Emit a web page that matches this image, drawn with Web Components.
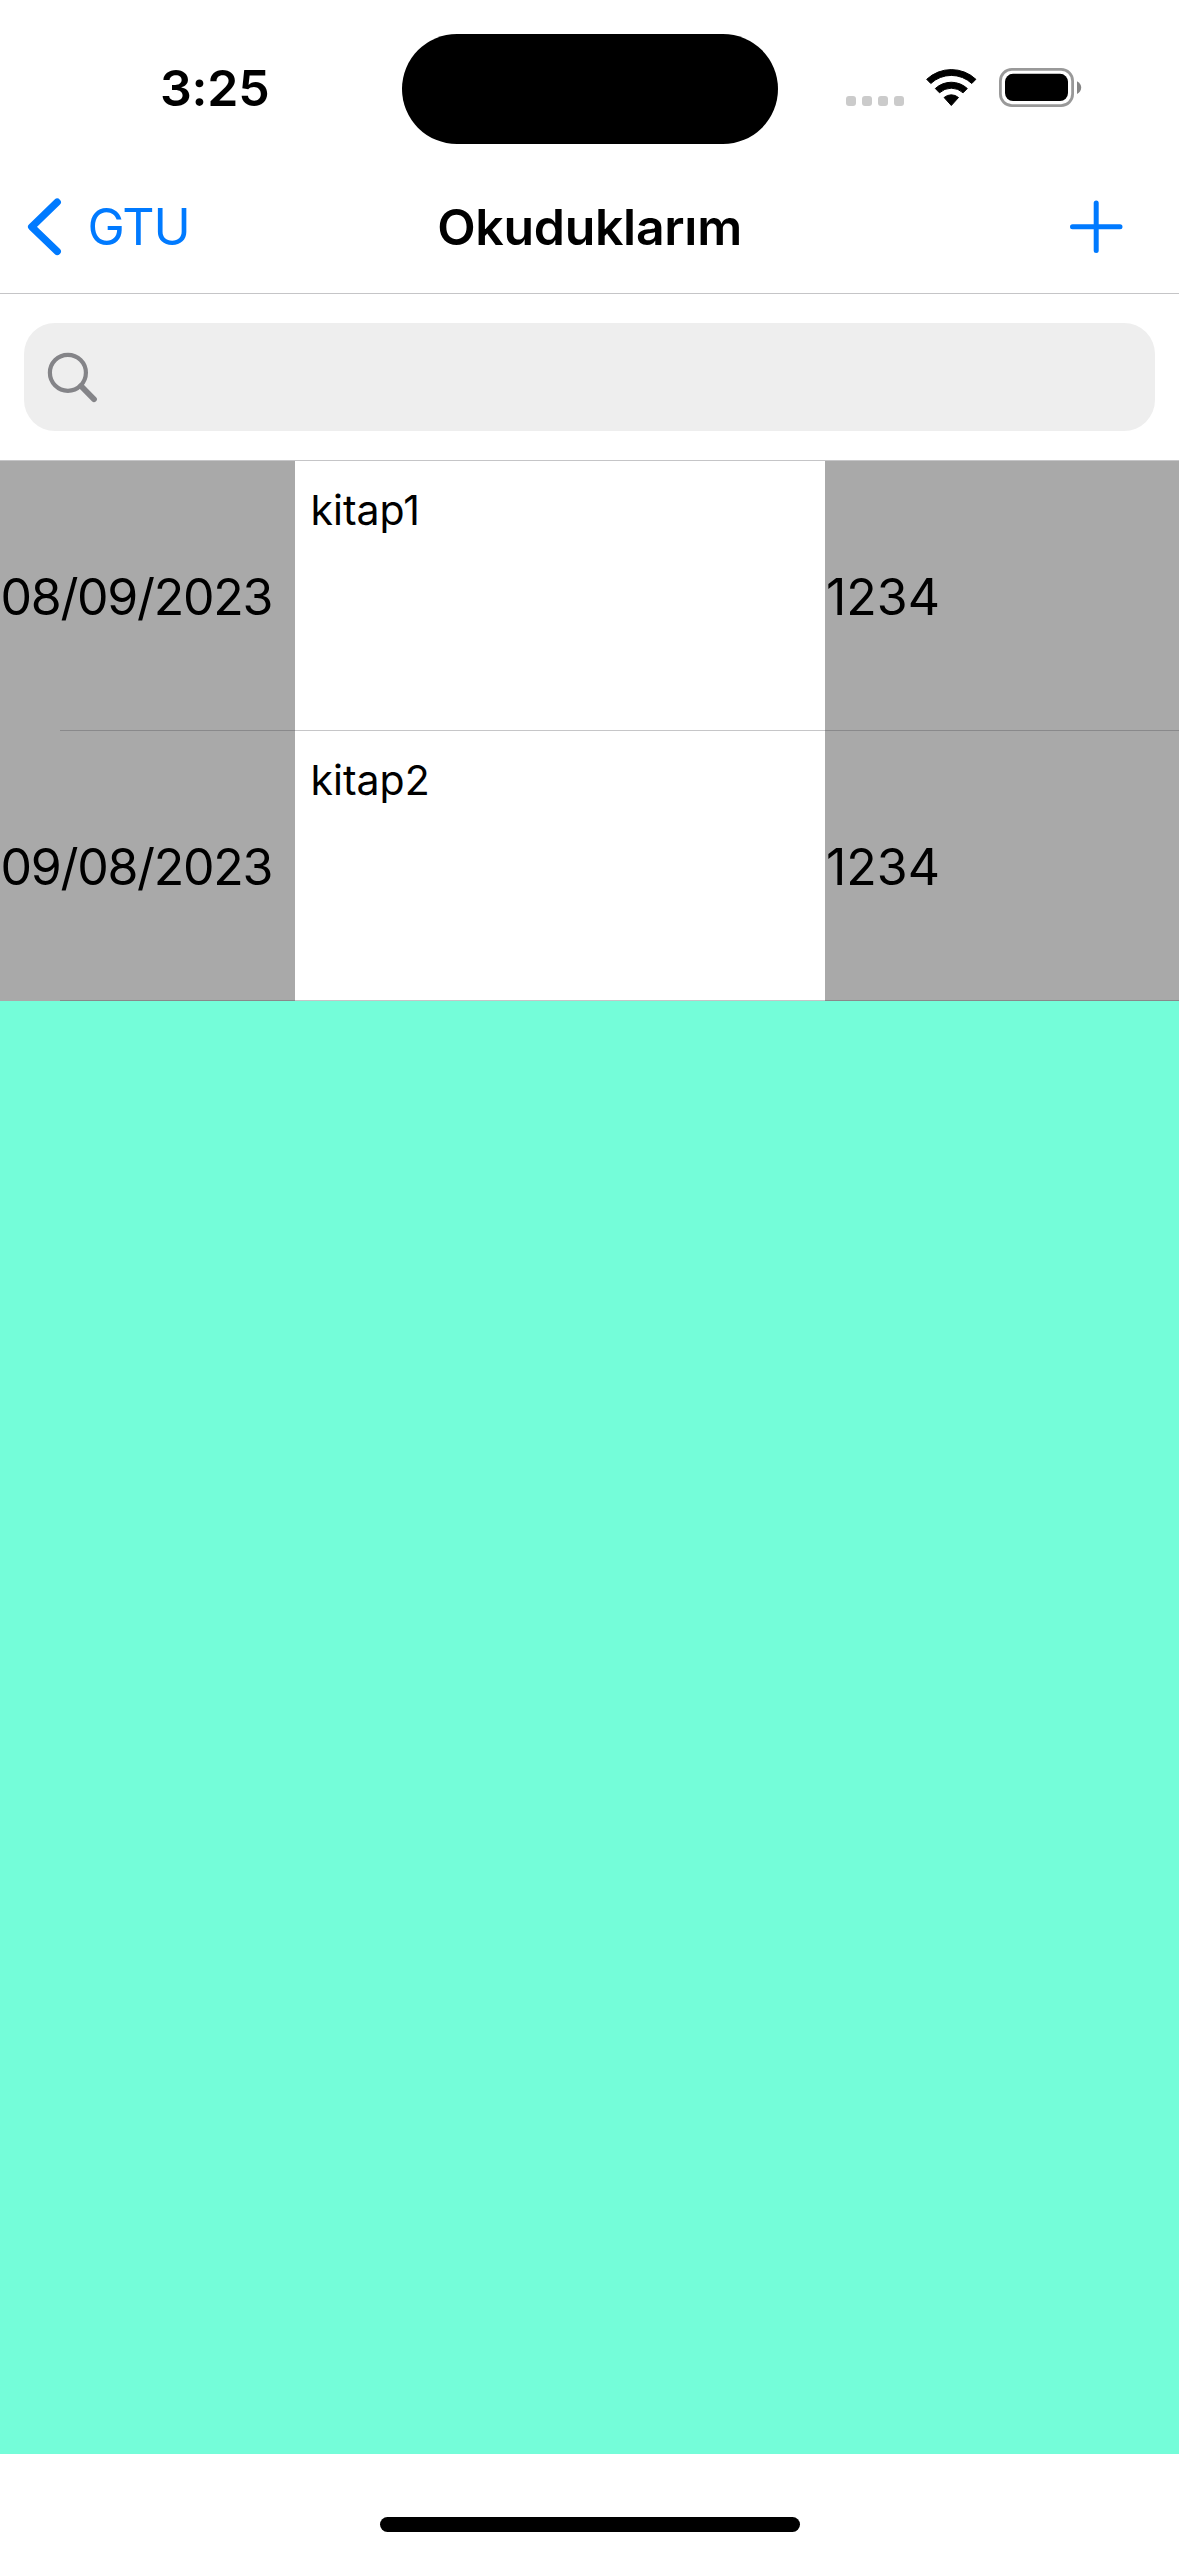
<!DOCTYPE html>
<html lang="tr">
<head>
<meta charset="utf-8">
<title>Okuduklarım</title>
<style>
html,body{margin:0;padding:0;background:#fff}
body{font-family:Inter,"Liberation Sans",sans-serif;color:#000}
</style>
</head>
<body>
<app-screen>
  <status-bar slot="status">3:25</status-bar>
  <nav-bar slot="nav"><span slot="back">GTU</span><span slot="title">Okuduklarım</span></nav-bar>
  <search-field slot="search"></search-field>
  <book-row><span slot="date">08/09/2023</span><span slot="name">kitap1</span><span slot="pages">1234</span></book-row>
  <book-row><span slot="date">09/08/2023</span><span slot="name">kitap2</span><span slot="pages">1234</span></book-row>
</app-screen>
<script>
const define = (name, html) => customElements.define(name, class extends HTMLElement {
  constructor() {
    super();
    const t = document.createElement('template');
    t.innerHTML = html;
    this.attachShadow({mode: 'open'}).append(t.content.cloneNode(true));
  }
});

define('app-screen', `
<style>
:host{display:flex;flex-direction:column;width:1179px;height:2556px;overflow:hidden;background:#fff}
main{height:1993px;background:#74fdd9}
footer{height:102px;box-sizing:border-box;padding-top:63px;display:flex;justify-content:center;align-items:flex-start}
i{width:420px;height:15px;border-radius:8px;background:#000}
</style>
<slot name="status"></slot><slot name="nav"></slot><slot name="search"></slot>
<main><slot></slot></main><footer><i></i></footer>`);

define('status-bar', `
<style>
:host{display:flex;height:177px;flex:none;box-sizing:border-box}
.time{width:402px;box-sizing:border-box;padding:58px 0 0 160px;font-size:50px;line-height:60px;font-weight:600;letter-spacing:-.2px;white-space:nowrap}
.island{width:375.6px;height:110px;margin-top:34px;border-radius:55px;background:#000}
svg{display:block;margin:60px 0 0 62.4px}
</style>
<div class="time"><slot></slot></div><div class="island"></div>
<svg width="260" height="60" viewBox="840 60 260 60">
<g fill="#cbcbcb"><rect x="846" y="96" width="10" height="10" rx="3"/><rect x="862" y="96" width="10" height="10" rx="3"/><rect x="878" y="96" width="10" height="10" rx="3"/><rect x="894" y="96" width="10" height="10" rx="3"/></g>
<g transform="translate(951.3 105.5)" stroke="#000" stroke-width="1" stroke-linejoin="round">
<path d="M-24.6-26.2A36 36 0 0 1 24.6-26.2L20.5-22A30 30 0 0 0-20.5-22Z"/>
<path d="M-16-17A23.6 23.6 0 0 1 16-17L11.8-12.7A17.3 17.3 0 0 0-11.8-12.7Z"/>
<path d="M0 0L-7.2-8A11 11 0 0 1 7.2-8Z"/></g>
<rect x="1000.4" y="69.4" width="72.2" height="36.2" rx="11.5" fill="none" stroke="#999" stroke-width="2.8"/>
<rect x="1005" y="73.8" width="63" height="27.2" rx="8"/>
<path d="M1077 81.2Q1081.2 83.4 1081.2 87.6T1077 94Z" fill="#858585"/>
</svg>`);

define('nav-bar', `
<style>
:host{display:grid;grid-template-columns:1fr auto 1fr;align-items:center;height:117px;flex:none;box-sizing:border-box;padding-bottom:17px;border-bottom:1px solid #c5c5c7;font-size:50px;line-height:60px}
.back{display:flex;align-items:center;color:#007aff;letter-spacing:-1px}
.back svg{margin:0 23.5px 0 24px}
.title{font-weight:600;letter-spacing:-.3px;white-space:nowrap}
.add{justify-self:end;margin-right:52px;display:block}
</style>
<div class="back"><svg width="40" height="60" viewBox="24 197 40 60" fill="none" stroke="#007aff" stroke-width="7.4" stroke-linecap="round" stroke-linejoin="round"><path d="M57.2 202.2L31.7 226.8L57.2 251.4"/></svg><slot name="back"></slot></div>
<div class="title"><slot name="title"></slot></div>
<svg class="add" width="60" height="60" viewBox="1067 197 60 60" stroke="#007aff" stroke-width="5" stroke-linecap="round"><path d="M1072.5 226.7H1120M1096.2 203V250.5"/></svg>`);

define('search-field', `
<style>
:host{display:block;height:167px;flex:none;box-sizing:border-box;padding:29px 24px;border-bottom:1px solid #c5c5c7}
div{height:108px;border-radius:31px;background:#eee;display:flex;align-items:center;padding-left:16px}
</style>
<div><svg width="60" height="60" viewBox="40 347 60 60" fill="none" stroke="#848488"><circle cx="67.9" cy="372.8" r="18" stroke-width="4.2"/><path d="M81 386L94 399.2" stroke-width="5.8" stroke-linecap="round"/></svg></div>`);

define('book-row', `
<style>
:host{display:grid;grid-template-columns:295px 530px 354px;height:270px;background:#a9a9a9;position:relative}
:host::after{content:"";position:absolute;left:60px;right:0;bottom:0;height:1px;background:rgba(60,60,67,.29)}
.n{display:flex;align-items:center;font-size:50px;line-height:60px;white-space:nowrap;padding:2px 0 0 1px}
.date{letter-spacing:-1.3px;padding-left:.5px}
.name{background:#fff;padding:24px 0 0 15.5px;font-size:41px;line-height:50px}
</style>
<div class="n date"><slot name="date"></slot></div><div class="name"><slot name="name"></slot></div><div class="n"><slot name="pages"></slot></div>`);
</script>
</body>
</html>
